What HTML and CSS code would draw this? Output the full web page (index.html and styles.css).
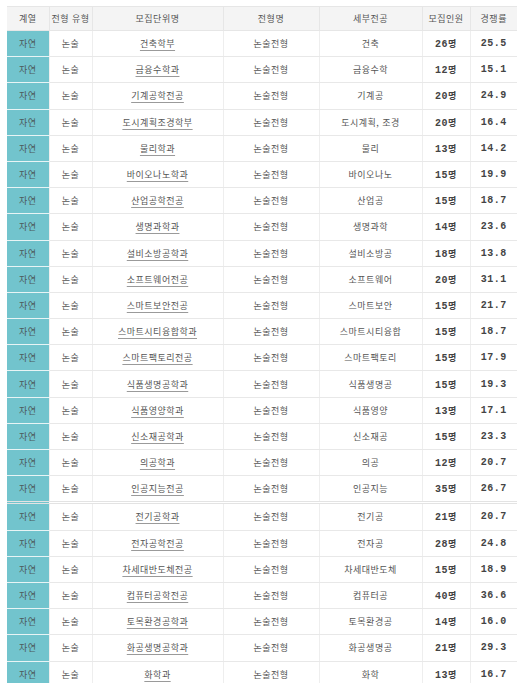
FILE: index.html
```html
<!DOCTYPE html>
<html lang="ko">
<head>
<meta charset="utf-8">
<link rel="stylesheet" href="styles.css">
</head>
<body>
<div class="wrap">
<table class="tbl">
<colgroup>
<col class="c1"><col class="c2"><col class="c3"><col class="c4"><col class="c5"><col class="c6"><col class="c7">
</colgroup>
<thead>
<tr><th>계열</th><th>전형 유형</th><th>모집단위명</th><th>전형명</th><th>세부전공</th><th>모집인원</th><th>경쟁률</th></tr>
</thead>
<tbody>
<tr><td class="cat">자연</td><td>논술</td><td><a>건축학부</a></td><td>논술전형</td><td>건축</td><td class="num">26<span>명</span></td><td class="num">25.5</td></tr>
<tr><td class="cat">자연</td><td>논술</td><td><a>금융수학과</a></td><td>논술전형</td><td>금융수학</td><td class="num">12<span>명</span></td><td class="num">15.1</td></tr>
<tr><td class="cat">자연</td><td>논술</td><td><a>기계공학전공</a></td><td>논술전형</td><td>기계공</td><td class="num">20<span>명</span></td><td class="num">24.9</td></tr>
<tr><td class="cat">자연</td><td>논술</td><td><a>도시계획조경학부</a></td><td>논술전형</td><td>도시계획, 조경</td><td class="num">20<span>명</span></td><td class="num">16.4</td></tr>
<tr><td class="cat">자연</td><td>논술</td><td><a>물리학과</a></td><td>논술전형</td><td>물리</td><td class="num">13<span>명</span></td><td class="num">14.2</td></tr>
<tr><td class="cat">자연</td><td>논술</td><td><a>바이오나노학과</a></td><td>논술전형</td><td>바이오나노</td><td class="num">15<span>명</span></td><td class="num">19.9</td></tr>
<tr><td class="cat">자연</td><td>논술</td><td><a>산업공학전공</a></td><td>논술전형</td><td>산업공</td><td class="num">15<span>명</span></td><td class="num">18.7</td></tr>
<tr><td class="cat">자연</td><td>논술</td><td><a>생명과학과</a></td><td>논술전형</td><td>생명과학</td><td class="num">14<span>명</span></td><td class="num">23.6</td></tr>
<tr><td class="cat">자연</td><td>논술</td><td><a>설비소방공학과</a></td><td>논술전형</td><td>설비소방공</td><td class="num">18<span>명</span></td><td class="num">13.8</td></tr>
<tr><td class="cat">자연</td><td>논술</td><td><a>소프트웨어전공</a></td><td>논술전형</td><td>소프트웨어</td><td class="num">20<span>명</span></td><td class="num">31.1</td></tr>
<tr><td class="cat">자연</td><td>논술</td><td><a>스마트보안전공</a></td><td>논술전형</td><td>스마트보안</td><td class="num">15<span>명</span></td><td class="num">21.7</td></tr>
<tr><td class="cat">자연</td><td>논술</td><td><a>스마트시티융합학과</a></td><td>논술전형</td><td>스마트시티융합</td><td class="num">15<span>명</span></td><td class="num">18.7</td></tr>
<tr><td class="cat">자연</td><td>논술</td><td><a>스마트팩토리전공</a></td><td>논술전형</td><td>스마트팩토리</td><td class="num">15<span>명</span></td><td class="num">17.9</td></tr>
<tr><td class="cat">자연</td><td>논술</td><td><a>식품생명공학과</a></td><td>논술전형</td><td>식품생명공</td><td class="num">15<span>명</span></td><td class="num">19.3</td></tr>
<tr><td class="cat">자연</td><td>논술</td><td><a>식품영양학과</a></td><td>논술전형</td><td>식품영양</td><td class="num">13<span>명</span></td><td class="num">17.1</td></tr>
<tr><td class="cat">자연</td><td>논술</td><td><a>신소재공학과</a></td><td>논술전형</td><td>신소재공</td><td class="num">15<span>명</span></td><td class="num">23.3</td></tr>
<tr><td class="cat">자연</td><td>논술</td><td><a>의공학과</a></td><td>논술전형</td><td>의공</td><td class="num">12<span>명</span></td><td class="num">20.7</td></tr>
<tr><td class="cat">자연</td><td>논술</td><td><a>인공지능전공</a></td><td>논술전형</td><td>인공지능</td><td class="num">35<span>명</span></td><td class="num">26.7</td></tr>
<tr class="split"><td class="cat">자연</td><td>논술</td><td><a>전기공학과</a></td><td>논술전형</td><td>전기공</td><td class="num">21<span>명</span></td><td class="num">20.7</td></tr>
<tr><td class="cat">자연</td><td>논술</td><td><a>전자공학전공</a></td><td>논술전형</td><td>전자공</td><td class="num">28<span>명</span></td><td class="num">24.8</td></tr>
<tr><td class="cat">자연</td><td>논술</td><td><a>차세대반도체전공</a></td><td>논술전형</td><td>차세대반도체</td><td class="num">15<span>명</span></td><td class="num">18.9</td></tr>
<tr><td class="cat">자연</td><td>논술</td><td><a>컴퓨터공학전공</a></td><td>논술전형</td><td>컴퓨터공</td><td class="num">40<span>명</span></td><td class="num">36.6</td></tr>
<tr><td class="cat">자연</td><td>논술</td><td><a>토목환경공학과</a></td><td>논술전형</td><td>토목환경공</td><td class="num">14<span>명</span></td><td class="num">16.0</td></tr>
<tr><td class="cat">자연</td><td>논술</td><td><a>화공생명공학과</a></td><td>논술전형</td><td>화공생명공</td><td class="num">21<span>명</span></td><td class="num">29.3</td></tr>
<tr><td class="cat">자연</td><td>논술</td><td><a>화학과</a></td><td>논술전형</td><td>화학</td><td class="num">13<span>명</span></td><td class="num">16.7</td></tr>
</tbody>
</table>
</div>
</body>
</html>
```
FILE: styles.css
```css
html, body {
  margin: 0;
  padding: 0;
  background: #ffffff;
}
.wrap {
  padding: 6px 5px 0 7px;
}
.tbl {
  width: 510px;
  border-collapse: collapse;
  table-layout: fixed;
  font-family: "Noto Sans CJK KR", sans-serif;
  font-size: 9px;
  color: #555555;
}
.c1 { width: 42px; }
.c2 { width: 43px; }
.c3 { width: 131px; }
.c4 { width: 96px; }
.c5 { width: 103px; }
.c6 { width: 48px; }
.c7 { width: 47px; }
.tbl th {
  height: 23px;
  padding: 0;
  background: #f4f4f4;
  font-weight: normal;
  color: #555555;
  border-top: 1px solid #e6e6e6;
  border-left: 1px solid #e6e6e6;
  border-bottom: 1px solid #e6e6e6;
  letter-spacing: 0.5px;
}
.tbl th:first-child { border-left: none; }
.tbl td {
  height: 25.2px;
  padding: 0;
  text-align: center;
  border-bottom: 1px solid #e8e8e8;
  border-left: 1px solid #eeeeee;
  letter-spacing: 0.5px;
}
.tbl td:first-child { border-left: none; }
.tbl td.cat {
  background: #72c4cd;
  color: #4d5a5c;
  border-bottom: 1px solid #e8f4f5;
}
.tbl a {
  color: #555555;
  text-decoration: underline;
  text-decoration-color: #9a9a9a;
  text-decoration-thickness: 1px;
  text-underline-offset: 3px;
}
.tbl td.num {
  font-family: "Liberation Mono", monospace;
  font-weight: bold;
  font-size: 10px;
  color: #444444;
  letter-spacing: 0.5px;
}
.tbl td.num span {
  font-family: "Noto Sans CJK KR", sans-serif;
  font-weight: bold;
  font-size: 9px;
}
.tbl tr.split td {
  border-top: 3px double #e3e3e3;
}
```
